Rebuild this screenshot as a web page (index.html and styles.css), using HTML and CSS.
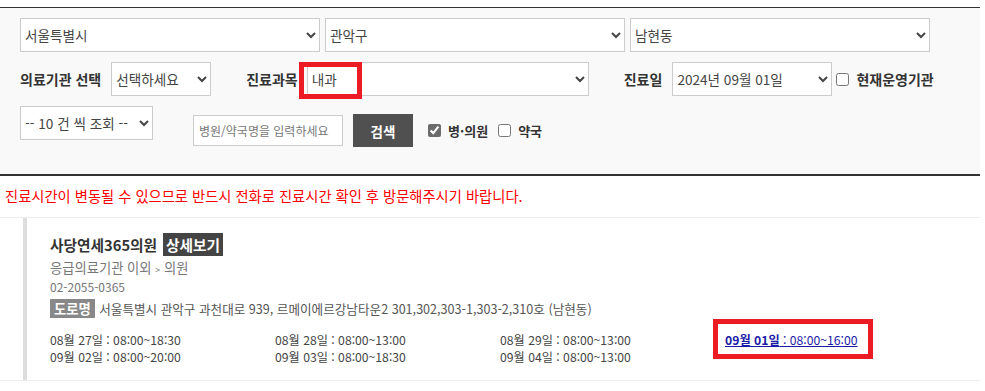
FILE: index.html
```html
<!DOCTYPE html>
<html lang="ko">
  <head>
    <meta charset="UTF-8" />
    <meta name="viewport" content="width=device-width, initial-scale=1.0" />
    <title>병의원 진료시간 조회</title>
    <link rel="stylesheet" href="styles.css">
  </head>
  <body>
    <div class="search-panel">
      <div class="row row-area">
        <select class="sel-area"><option>서울특별시</option></select>
        <select class="sel-area"><option>관악구</option></select>
        <select class="sel-area"><option>남현동</option></select>
      </div>

      <div class="row row-filter">
        <label class="lbl">의료기관 선택</label>
        <select class="sel-type"><option>선택하세요</option></select>
        <label class="lbl lbl-dept">진료과목</label>
        <div class="dept-wrap">
          <select class="sel-dept"><option>내과</option></select>
          <span class="mark mark-dept"></span>
        </div>
        <label class="lbl lbl-date">진료일</label>
        <select class="sel-date"><option>2024년 09월 01일</option></select>
        <input type="checkbox" id="openNow" />
        <label class="lbl" for="openNow">현재운영기관</label>
      </div>

      <div class="row row-search">
        <select class="sel-count"><option>-- 10 건 씩 조회 --</option></select>
        <div class="search-group">
          <input type="text" class="keyword" placeholder="병원/약국명을 입력하세요" />
          <button class="btn-search">검색</button>
          <input type="checkbox" id="chkHosp" checked />
          <label class="lbl lbl-sm" for="chkHosp">병·의원</label>
          <input type="checkbox" id="chkPharm" />
          <label class="lbl lbl-sm" for="chkPharm">약국</label>
        </div>
      </div>
    </div>

    <p class="notice">진료시간이 변동될 수 있으므로 반드시 전화로 진료시간 확인 후 방문해주시기 바랍니다.</p>

    <ul class="result-list">
      <li class="result-item">
        <div class="card">
          <div class="card-title">
            <strong>사당연세365의원</strong>
            <a class="btn-detail">상세보기</a>
          </div>
          <div class="card-cat">응급의료기관 이외 <span class="gt">&gt;</span> 의원</div>
          <div class="card-tel">02-2055-0365</div>
          <div class="card-addr">
            <span class="addr-tag">도로명</span>
            서울특별시 관악구 과천대로 939, 르메이에르강남타운2 301,302,303-1,303-2,310호 (남현동)
          </div>
          <div class="schedule">
            <span>08월 27일 : 08:00~18:30</span>
            <span>08월 28일 : 08:00~13:00</span>
            <span>08월 29일 : 08:00~13:00</span>
            <span class="today">
              <a><b>09월 01일</b> : 08:00~16:00</a>
              <span class="mark mark-today"></span>
            </span>
            <span>09월 02일 : 08:00~20:00</span>
            <span>09월 03일 : 08:00~18:30</span>
            <span>09월 04일 : 08:00~13:00</span>
          </div>
        </div>
      </li>
    </ul>
  </body>
</html>
```

FILE: styles.css
```css
body,
html {
  margin: 0;
  background-color: #fff;
  font-family: "Noto Sans CJK KR", "Noto Sans", sans-serif;
  color: #444;
}

select,
input,
button {
  font-family: "Noto Sans CJK KR", "Noto Sans", sans-serif;
}

.search-panel {
  width: 940px;
  margin-top: 7px;
  padding: 10px 20px 27px;
  background-color: #f9f9f9;
  border-top: 1px solid #333;
  border-bottom: 2px solid #333;
}

.row {
  display: flex;
  align-items: center;
}

.row + .row {
  margin-top: 10px;
}

select {
  height: 34px;
  border: 1px solid #ccc;
  border-radius: 0;
  background-color: #fff;
  color: #444;
  font-size: 13.6px;
  padding: 0;
  margin: 0;
}

.row-area {
  gap: 5px;
}

.sel-area {
  width: 300px;
}

.lbl {
  font-size: 14px;
  font-weight: bold;
  color: #333;
  line-height: 20px;
}

.lbl-sm {
  font-size: 13px;
}

.sel-type {
  width: 100px;
  margin-left: 10px;
}

.lbl-dept {
  margin-left: 35px;
}

.dept-wrap {
  position: relative;
  margin-left: 9px;
}

.sel-dept {
  width: 282px;
  display: block;
}

.lbl-date {
  margin-left: 35px;
}

.sel-date {
  width: 160px;
  margin-left: 10px;
}

input[type="checkbox"] {
  width: 13px;
  height: 13px;
  margin: 0 7px 0 4px;
  accent-color: #6b6b6b;
}

.row-search {
  align-items: flex-start;
}

.sel-count {
  width: 133px;
}

.search-group {
  display: flex;
  align-items: center;
  margin-left: 40px;
  margin-top: 8px;
  height: 33px;
}

.keyword {
  width: 150px;
  height: 31px;
  box-sizing: border-box;
  border: 1px solid #ccc;
  padding: 0 5px;
  font-size: 12px;
  color: #444;
}

.keyword::placeholder {
  color: #777;
}

.btn-search {
  width: 60px;
  height: 33px;
  margin-left: 10px;
  margin-right: 11px;
  border: none;
  background-color: #505050;
  color: #fff;
  font-size: 13.5px;
  font-weight: bold;
}

#chkPharm {
  margin-left: 10px;
}

.notice {
  margin: 0;
  width: 975px;
  padding: 0 0 0 5px;
  height: 41px;
  line-height: 39px;
  color: #f00;
  font-size: 14.3px;
  border-bottom: 1px solid #eee;
}

.result-list {
  list-style: none;
  margin: 0;
  padding: 0;
  width: 980px;
}

.result-item {
  padding-left: 23px;
  border-bottom: 1px solid #eee;
}

.card {
  border-left: 4px solid #ddd;
  padding: 15px 0 14px 23px;
}

.card-title {
  display: flex;
  align-items: center;
  gap: 6px;
  height: 23px;
  font-size: 14.7px;
  color: #333;
}

.btn-detail {
  background-color: #444;
  color: #fff;
  font-weight: bold;
  padding: 0 3px;
  line-height: 23px;
}

.card-cat {
  margin-top: 3px;
  font-size: 13.3px;
  line-height: 17px;
  color: #777;
}

.gt {
  font-size: 9px;
}

.card-tel {
  font-size: 12px;
  line-height: 17px;
  color: #777;
}

.card-addr {
  margin-top: 4px;
  font-size: 12.6px;
  line-height: 20px;
  color: #555;
}

.addr-tag {
  display: inline-block;
  background-color: #888;
  color: #fff;
  font-weight: bold;
  font-size: 13.3px;
  padding: 0 4px;
  margin-right: 1px;
  line-height: 19px;
}

.schedule {
  display: grid;
  grid-template-columns: repeat(4, 225px);
  margin-top: 13px;
  font-size: 12.2px;
  line-height: 17px;
  color: #444;
}

.today {
  position: relative;
}

.today a {
  color: #1a1aa6;
  text-decoration: underline;
}

/* red annotation boxes */
.mark {
  position: absolute;
  border: 5px solid #ec1c24;
  pointer-events: none;
}

.mark-dept {
  left: -8px;
  top: 0;
  width: 53px;
  height: 27px;
}

.mark-today {
  left: -12px;
  top: -13px;
  width: 150px;
  height: 30px;
}
```
